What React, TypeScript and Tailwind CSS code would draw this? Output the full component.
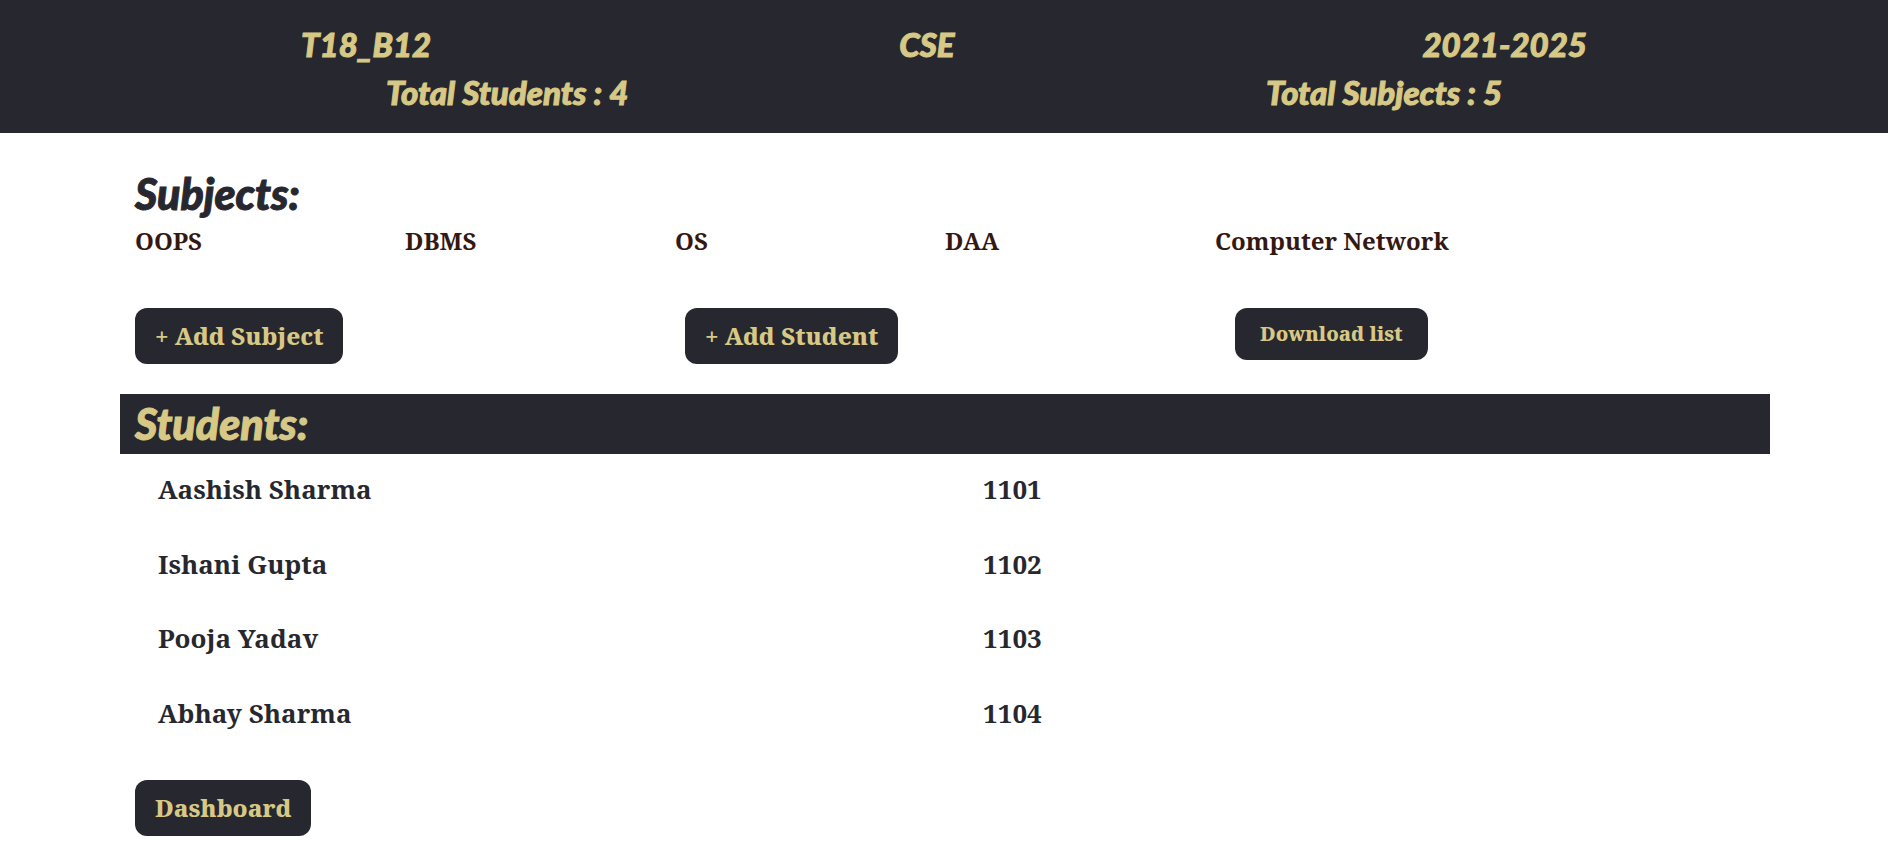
const subjects = ["OOPS", "DBMS", "OS", "DAA", "Computer Network"];

const students = [
  { name: "Aashish Sharma", roll: "1101" },
  { name: "Ishani Gupta", roll: "1102" },
  { name: "Pooja Yadav", roll: "1103" },
  { name: "Abhay Sharma", roll: "1104" },
];

const display =
  "font-['Lato',sans-serif] font-black italic [-webkit-text-stroke:1px_currentColor]";
const button =
  "h-14 rounded-xl bg-[#27282f] px-5 text-[24px] font-extrabold text-[#d7c985] cursor-pointer whitespace-nowrap";

export default function App() {
  return (
    <div className="min-h-screen bg-white font-['Noto_Serif','DejaVu_Serif_Condensed','DejaVu_Serif',serif] text-[#27282f]">
      <header
        className={`${display} bg-[#27282f] px-[67px] pt-5 pb-[17px] text-[33px] leading-[48px] text-[#d7c985]`}
      >
        <div className="flex justify-around">
          <span>T18_B12</span>
          <span>CSE</span>
          <span>2021-2025</span>
        </div>
        <div className="flex justify-around">
          <span>Total Students : {students.length}</span>
          <span>Total Subjects : {subjects.length}</span>
        </div>
      </header>

      <main className="pt-8 pr-[118px] pl-[120px]">
        <section className="px-[15px]">
          <h2 className={`${display} text-[43px] leading-[58px]`}>Subjects:</h2>
          <ul className="grid grid-cols-6 text-[24px] leading-9 font-bold text-[#351812]">
            {subjects.map((subject) => (
              <li key={subject} className="whitespace-nowrap">
                {subject}
              </li>
            ))}
          </ul>
        </section>

        <div className="mt-[49px] grid grid-cols-3 items-start">
          <div className="px-[15px]">
            <button type="button" className={button}>
              + Add Subject
            </button>
          </div>
          <div className="px-[15px]">
            <button type="button" className={button}>
              + Add Student
            </button>
          </div>
          <div className="px-[15px]">
            <button
              type="button"
              className="h-[52px] cursor-pointer rounded-xl bg-[#27282f] px-[25px] text-[20px] font-extrabold whitespace-nowrap text-[#d7c985]"
            >
              Download list
            </button>
          </div>
        </div>

        <section className="mt-[30px]">
          <h2
            className={`${display} bg-[#27282f] px-[15px] text-[43px] leading-[60px] text-[#d7c985]`}
          >
            Students:
          </h2>
          <table className="h-[298px] w-full table-fixed text-left text-[26px] leading-10">
            <tbody>
              {students.map((student) => (
                <tr key={student.roll}>
                  <th scope="row" className="px-[38px] pb-1 font-bold">
                    {student.name}
                  </th>
                  <td className="px-[38px] pb-1 font-bold">{student.roll}</td>
                </tr>
              ))}
            </tbody>
          </table>
        </section>

        <div className="mt-7 px-[15px]">
          <button type="button" className={button}>
            Dashboard
          </button>
        </div>
      </main>
    </div>
  );
}
